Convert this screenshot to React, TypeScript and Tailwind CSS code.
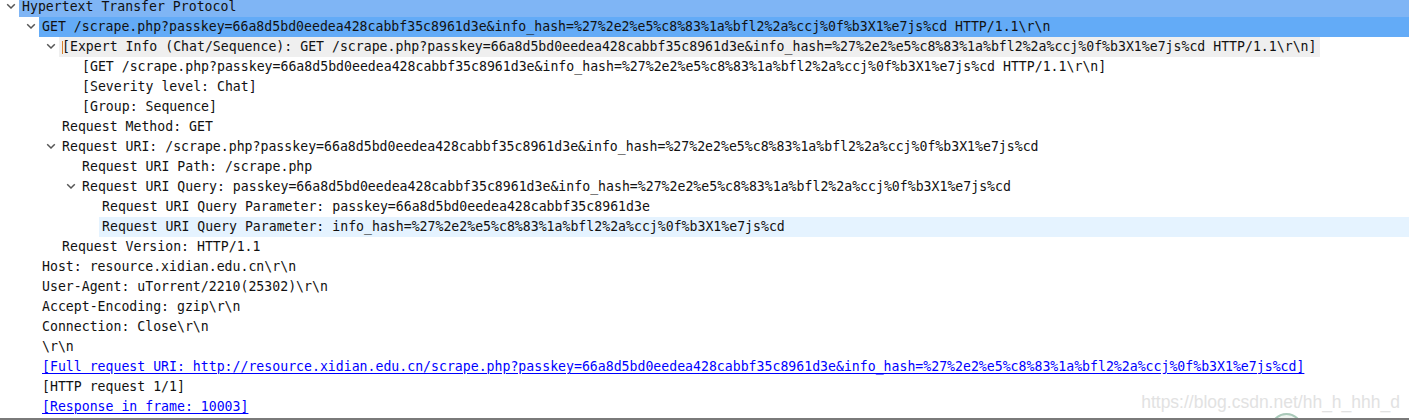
import React from "react";

const HASH = "%27%2e2%e5%c8%83%1a%bfl2%2a%ccj%0f%b3X1%e7js%cd";
const KEY = "66a8d5bd0eedea428cabbf35c8961d3e";
const REQ = `GET /scrape.php?passkey=${KEY}&info_hash=${HASH} HTTP/1.1\\r\\n`;

type Row = {
  level: number;
  text: string;
  open?: boolean;
  kind?: "parent" | "selected" | "expert" | "hover" | "link";
};

const rows: Row[] = [
  { level: 0, text: "Hypertext Transfer Protocol", open: true, kind: "parent" },
  { level: 1, text: REQ, open: true, kind: "selected" },
  { level: 2, text: `[Expert Info (Chat/Sequence): ${REQ}]`, open: true, kind: "expert" },
  { level: 3, text: `[${REQ}]` },
  { level: 3, text: "[Severity level: Chat]" },
  { level: 3, text: "[Group: Sequence]" },
  { level: 2, text: "Request Method: GET" },
  { level: 2, text: `Request URI: /scrape.php?passkey=${KEY}&info_hash=${HASH}`, open: true },
  { level: 3, text: "Request URI Path: /scrape.php" },
  { level: 3, text: `Request URI Query: passkey=${KEY}&info_hash=${HASH}`, open: true },
  { level: 4, text: `Request URI Query Parameter: passkey=${KEY}` },
  { level: 4, text: `Request URI Query Parameter: info_hash=${HASH}`, kind: "hover" },
  { level: 2, text: "Request Version: HTTP/1.1" },
  { level: 1, text: "Host: resource.xidian.edu.cn\\r\\n" },
  { level: 1, text: "User-Agent: uTorrent/2210(25302)\\r\\n" },
  { level: 1, text: "Accept-Encoding: gzip\\r\\n" },
  { level: 1, text: "Connection: Close\\r\\n" },
  { level: 1, text: "\\r\\n" },
  {
    level: 1,
    text: `[Full request URI: http://resource.xidian.edu.cn/scrape.php?passkey=${KEY}&info_hash=${HASH}]`,
    kind: "link",
  },
  { level: 1, text: "[HTTP request 1/1]" },
  { level: 1, text: "[Response in frame: 10003]", kind: "link" },
];

const indent = ["pl-[3px]", "pl-[23px]", "pl-[43px]", "pl-[63px]", "pl-[83px]"];

function Chevron() {
  return (
    <svg width="10" height="7" viewBox="0 0 10 7" className="ml-[3px] mt-[-2px]">
      <polyline points="1.2,1.2 5,5 8.8,1.2" fill="none" stroke="#555" strokeWidth="1.5" />
    </svg>
  );
}

function TreeRow({ row }: { row: Row }) {
  const text =
    row.kind === "link" ? (
      <span className="text-[#0000ff] underline underline-offset-[2px]">{row.text}</span>
    ) : (
      <span>{row.text}</span>
    );

  let body: React.ReactNode;
  if (row.kind === "parent") {
    body = <div className="flex h-full flex-1 items-center bg-[#7fb5f5] pl-[3px]">{text}</div>;
  } else if (row.kind === "selected") {
    body = <div className="flex h-full flex-1 items-center bg-[#63abf7] pl-[3px]">{text}</div>;
  } else if (row.kind === "hover") {
    body = <div className="flex h-full flex-1 items-center bg-[#e5f3ff] pl-[3px]">{text}</div>;
  } else if (row.kind === "expert") {
    body = (
      <div className="flex h-full items-center bg-[#efefef] pl-[3px] pr-[4px]">
        <span className="-mr-px h-[13px] w-px bg-[#d9822b]" />
        {text}
      </div>
    );
  } else {
    body = <div className="flex h-full items-center pl-[3px]">{text}</div>;
  }

  return (
    <div className={`flex h-5 items-center whitespace-pre ${indent[row.level]}`}>
      <div className="flex w-4 items-center">{row.open ? <Chevron /> : null}</div>
      {body}
    </div>
  );
}

export default function App() {
  return (
    <div className="relative h-[420px] w-[1409px] overflow-hidden border-b-2 border-[#7a7a7a] bg-white">
      <div
        className="-mt-[3px] flex flex-col text-[13.2px] leading-5 text-[#111]"
        style={{ fontFamily: '"DejaVu Sans Mono", "Liberation Mono", monospace' }}
      >
        {rows.map((r, i) => (
          <TreeRow key={i} row={r} />
        ))}
      </div>

      {/* csdn watermark */}
      <div className="absolute right-[9px] top-[389px] font-['Liberation_Sans',sans-serif] text-[17.5px] text-[#e2e2e2]">
        https://blog.csdn.net/hh_h_hhh_d
      </div>
      <div className="absolute left-[1270px] top-[413px] h-[33px] w-[33px] rounded-full border-2 border-[#a9c9b9] bg-[#eef4f0]" />
    </div>
  );
}
